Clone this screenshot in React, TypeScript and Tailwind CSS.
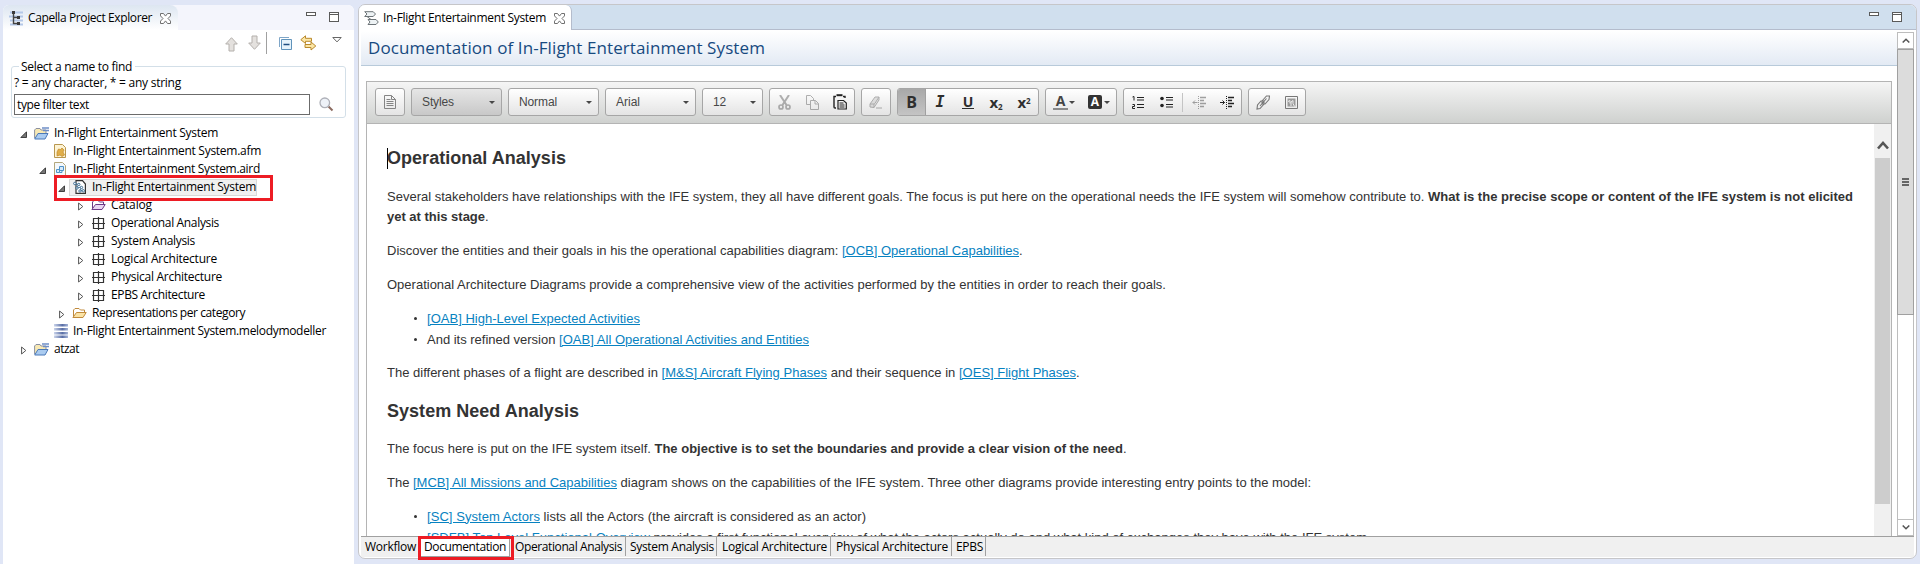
import { useLayoutEffect, useRef, useState, type ReactNode } from "react";

type FitProps = { w: number; children: string; className?: string };

/** Text whose letter spacing is computed so that it spans `w` pixels. */
function Fit({ w, children, className = "" }: FitProps) {
  const ref = useRef<HTMLSpanElement>(null);
  const [spacing, setSpacing] = useState(0);
  useLayoutEffect(() => {
    const el = ref.current;
    if (!el) return;
    el.style.letterSpacing = "0px";
    const natural = el.getBoundingClientRect().width;
    const next = (w - natural) / children.length;
    el.style.letterSpacing = `${next}px`;
    setSpacing(next);
  }, [w, children]);
  return (
    <span ref={ref} className={`inline-block whitespace-pre ${className}`} style={{ letterSpacing: `${spacing}px` }}>
      {children}
    </span>
  );
}

/* ---------- small window icons ---------- */

function CloseIcon() {
  return (
    <svg width="11" height="11" viewBox="0 0 11 11" fill="#fff" stroke="#6f6f6f">
      <path d="M.5.5h3l2 2.6 2-2.6h3v2.4L8 5.5l2.5 2.6v2.4h-3l-2-2.6-2 2.6h-3V8.100L3 5.500.5 2.900z" />
    </svg>
  );
}

function WindowButtons() {
  return (
    <div className="flex items-start gap-[13px]">
      <svg width="10" height="4" viewBox="0 0 10 4">
        <rect x=".5" y=".5" width="9" height="3" fill="#fff" stroke="#5a5a5a" />
      </svg>
      <svg width="10" height="10" viewBox="0 0 10 10">
        <rect x=".5" y=".5" width="9" height="9" fill="#fff" stroke="#5a5a5a" />
        <path d="M0 2.500h10" stroke="#5a5a5a" />
      </svg>
    </div>
  );
}

function ExplorerIcon() {
  return (
    <svg width="15" height="15" viewBox="0 0 15 15">
      <path d="M1 1.500h13M0 5.500h14M1 9.500h13M1 13.500h13" stroke="#b4c8e8" strokeWidth="2" />
      <path d="M4.500 1v11.500H9M4.500 6.500H9" fill="none" stroke="#444" strokeWidth="1.400" />
      <path d="M3 0h3v3H3zM8 5h3v3H8zM8 11h3v3H8z" fill="#3a3a3a" />
    </svg>
  );
}

function ArrowIcon({ down = false }: { down?: boolean }) {
  return (
    <svg width="13" height="15" viewBox="0 0 13 15" className={down ? "rotate-180" : ""}>
      <path d="M6.500.7 12.300 7H9v7H4V7H.7z" fill="#e4e1de" stroke="#b4b0ac" />
    </svg>
  );
}

/* ---------- tree ---------- */

function Folder({ stroke, fill }: { stroke: string; fill: string }) {
  return (
    <svg width="15" height="12" viewBox="0 0 15 12" className="-ml-px">
      <path d="M1.500 9.500V3L3 1.500h4L8.500 3h4v2" fill="#fff" stroke={stroke} />
      <path d="M.9 10.500 4.500 5.500h9.700L11 10.500z" fill={fill} stroke={stroke} />
    </svg>
  );
}

function ProjectIcon() {
  return (
    <svg width="15" height="13" viewBox="0 0 15 13" className="-ml-px">
      <path d="M.6 11V3L2 1.500h4L7 3h5v3" fill="#f8e9b4" stroke="#8b90a0" />
      <path d="M.7 12 4 6.500h10L11 12z" fill="#aacbf0" stroke="#4a78b8" />
      <path d="M8 1h7M9 3.500h6" stroke="#6f8fc8" strokeWidth="1.300" />
    </svg>
  );
}

function FileIcon({ kind }: { kind: "afm" | "aird" | "model" }) {
  if (kind === "model")
    return (
      <svg width="13" height="14" viewBox="0 0 13 14">
        <path d="M3 .6h6.500L12.400 4v9.400H3z" fill="#fff" stroke="#333" strokeWidth="1.200" />
        <path d="M2 4.500 6 4 3.500 8l5-1-1.500 4 3.500-1" fill="none" stroke="#31648c" strokeWidth=".8" />
        <g fill="#fff" stroke="#31648c" strokeWidth=".9">
          <circle cx="1.800" cy="3.500" r="1.200" /><circle cx="5.800" cy="4.500" r="1.200" /><circle cx="4" cy="8" r="1.200" />
          <circle cx="8.500" cy="7.500" r="1.200" /><circle cx="7" cy="11" r="1.200" /><circle cx="10.300" cy="10.800" r="1.200" />
        </g>
      </svg>
    );
  return (
    <svg width="12" height="14" viewBox="0 0 12 14">
      <path d="M.5.5h8l3 3v10H.5z" fill={kind === "afm" ? "#fdf3d4" : "#f4f8fc"} stroke={kind === "afm" ? "#b8974f" : "#b3a77c"} />
      {kind === "afm" ? (
        <path d="M3 8 4.500 5l2 .5L8 4l2 2-1 2 1.500 3-2.500 1.500L6 11l-3 1z" fill="#e0ae4a" stroke="#c08a2c" strokeWidth=".7" />
      ) : (
        <path d="M5.500 4.500h4v4h-4zM2.500 7.500h3v3h-3zM5.500 10.500h2.500v-2" fill="#d7e9f8" stroke="#4e93c8" />
      )}
    </svg>
  );
}

function PackageIcon() {
  return (
    <svg width="13" height="13" viewBox="0 0 13 13" fill="none" stroke="#333">
      <path d="M1.500 1.500h10v10h-10zM6.500 0v13M0 6.500h13" strokeWidth="1.200" />
    </svg>
  );
}

function StackIcon() {
  return (
    <svg width="14" height="14" viewBox="0 0 14 14">
      <defs>
        <linearGradient id="stack">
          <stop offset="0" stopColor="#c9d3ea" />
          <stop offset=".6" stopColor="#5a6fa6" />
          <stop offset="1" stopColor="#a4b3d6" />
        </linearGradient>
      </defs>
      <path d="M0 0h14v2.500H0zM0 4h14v2.500H0zM0 8h14v2.500H0zM0 11.500h14V14H0z" fill="url(#stack)" />
    </svg>
  );
}

type Row = { pad: string; open?: boolean; closed?: boolean; icon: ReactNode; text: string; w: number; selected?: boolean };

const rows: Row[] = [
  { pad: "pl-[15px]", open: true, icon: <ProjectIcon />, text: "In-Flight Entertainment System", w: 164 },
  { pad: "pl-[34px]", icon: <FileIcon kind="afm" />, text: "In-Flight Entertainment System.afm", w: 188 },
  { pad: "pl-[34px]", open: true, icon: <FileIcon kind="aird" />, text: "In-Flight Entertainment System.aird", w: 187 },
  { pad: "pl-[53px]", open: true, icon: <FileIcon kind="model" />, text: "In-Flight Entertainment System", w: 164, selected: true },
  { pad: "pl-[72px]", closed: true, icon: <Folder stroke="#6c3a86" fill="#e8d6f2" />, text: "Catalog", w: 41 },
  { pad: "pl-[72px]", closed: true, icon: <PackageIcon />, text: "Operational Analysis", w: 108 },
  { pad: "pl-[72px]", closed: true, icon: <PackageIcon />, text: "System Analysis", w: 84 },
  { pad: "pl-[72px]", closed: true, icon: <PackageIcon />, text: "Logical Architecture", w: 106 },
  { pad: "pl-[72px]", closed: true, icon: <PackageIcon />, text: "Physical Architecture", w: 111 },
  { pad: "pl-[72px]", closed: true, icon: <PackageIcon />, text: "EPBS Architecture", w: 94 },
  { pad: "pl-[53px]", closed: true, icon: <Folder stroke="#c08a3c" fill="#fbe3a4" />, text: "Representations per category", w: 153 },
  { pad: "pl-[34px]", icon: <StackIcon />, text: "In-Flight Entertainment System.melodymodeller", w: 253 },
  { pad: "pl-[15px]", closed: true, icon: <ProjectIcon />, text: "atzat", w: 25 },
];

function Tree() {
  return (
    <div className="mt-[6px] w-[325px] overflow-hidden">
      {rows.map((r, i) => (
        <div key={i} className={`flex h-[18px] items-center ${r.pad}`}>
          <span className="flex w-[13px] shrink-0 justify-start pt-[3px]">
            {r.open && (
              <svg width="7" height="7" viewBox="0 0 7 7" className="ml-[2px]">
                <path d="M6.500.8v5.700H.8z" fill="#777" stroke="#222" strokeWidth=".8" />
              </svg>
            )}
            {r.closed && (
              <svg width="6" height="9" viewBox="0 0 6 9" className="ml-[3px]">
                <path d="M.6 1v7L4.800 4.500z" fill="#fff" stroke="#555" />
              </svg>
            )}
          </span>
          <span className={`flex h-[17px] items-center ${r.selected ? "border border-[#d8d8d8] bg-[#f0f0f0]" : "border border-transparent"}`}>
            <span className="ml-[3px] flex w-[19px] shrink-0 items-center">{r.icon}</span>
            <Fit w={r.w}>{r.text}</Fit>
          </span>
        </div>
      ))}
    </div>
  );
}

function Explorer() {
  return (
    <aside className="relative flex w-[351px] shrink-0 flex-col overflow-hidden rounded-t-[6px] bg-white">
      <div className="flex h-[25px] justify-between bg-[#f4f5fc]">
        <div className="flex w-[175px] items-center rounded-tr-[8px] bg-gradient-to-b from-[#dde6f1] to-white pl-[6px] pt-[1px]">
          <ExplorerIcon />
          <Fit w={124} className="ml-[4px]">Capella Project Explorer</Fit>
          <span className="ml-[8px]"><CloseIcon /></span>
        </div>
        <div className="mr-[15px] mt-[7px]"><WindowButtons /></div>
      </div>
      <div className="flex h-[26px] items-start pl-[222px] pt-[2px]">
        <span className="mt-[5px]"><ArrowIcon /></span>
        <span className="ml-[10px] mt-[3px]"><ArrowIcon down /></span>
        <span className="ml-[5px] h-[22px] w-px bg-[#a0a0a0]" />
        <svg width="13" height="13" viewBox="0 0 13 13" className="ml-[12px] mt-[5px]">
          <path d="M.5 10V.5H10" fill="none" stroke="#7fa6c8" />
          <path d="M2.500 2.500h10v10h-10z" fill="#e6f3fb" stroke="#5f93bb" />
          <path d="M4.500 7.500h6" stroke="#1f4e80" strokeWidth="1.500" />
        </svg>
        <svg width="17" height="16" viewBox="0 0 17 16" className="ml-[8px] mt-[3px]" fill="#fbe6a6" stroke="#b9892c">
          <path d="M5.500.8v2.500h6v3h-6V8.500L.8 4.700zM11 7v2.500H5v3h6V15l4.800-4z" />
        </svg>
        <svg width="10" height="6" viewBox="0 0 10 6" className="ml-[15px] mt-[5px]">
          <path d="M.8.5h8.400L5 4.900z" fill="#fff" stroke="#666" />
        </svg>
      </div>
      <div className="ml-[8px] mt-[10px] h-[52px] w-[335px] rounded-[3px] border border-[#d3dfe8] pl-[2px]">
        <div className="-mt-[9px] ml-[5px] h-[18px] w-[116px] bg-white pl-[2px] leading-[18px]">
          <Fit w={111}>Select a name to find</Fit>
        </div>
        <div className="-mt-[2px] h-[17px] leading-[17px]"><Fit w={167}>? = any character, * = any string</Fit></div>
        <div className="mt-[3px] flex items-center">
          <div className="flex h-[21px] w-[296px] items-center border border-[#6b6b6b] pl-[2px]">
            <Fit w={72}>type filter text</Fit>
          </div>
          <svg width="15" height="15" viewBox="0 0 15 15" className="ml-[9px]">
            <path d="m9.500 9.500 4 4" stroke="#8b6a5f" strokeWidth="2" />
            <circle cx="5.800" cy="5.800" r="4.800" fill="#eef2f8" stroke="#aeb0b8" strokeWidth="1.300" />
          </svg>
        </div>
      </div>
      <Tree />
      <div className="absolute left-[51px] top-[170px] h-[26px] w-[219px] border-[3px] border-[#ed1c24]" />
    </aside>
  );
}

/* ---------- editor toolbar ---------- */

const box = "flex h-[28px] items-center rounded-[3px] border border-[#a6a6a6] bg-gradient-to-b from-white to-[#e4e4e4]";

function Caret() {
  return (
    <svg width="6" height="3" viewBox="0 0 6 3"><path d="M0 0h6L3 3z" fill="#474747" /></svg>
  );
}

function Combo({ label, w, width, dark = false }: { label: string; w: number; width: string; dark?: boolean }) {
  return (
    <div className={`flex h-[28px] items-center justify-between rounded-[3px] border border-[#a6a6a6] bg-gradient-to-b pl-[10px] pr-[6px] text-[12px] text-[#474747] ${width} ${dark ? "from-[#e6e6e6] to-[#c8c8c8]" : "from-white to-[#e4e4e4]"}`}>
      <Fit w={w}>{label}</Fit>
      <Caret />
    </div>
  );
}

function Cell({ children, faded = false }: { children: ReactNode; faded?: boolean }) {
  return <span className={`flex w-[28px] shrink-0 items-center justify-center ${faded ? "opacity-40" : ""}`}>{children}</span>;
}

function IndentIcon({ out = false }: { out?: boolean }) {
  return (
    <svg width="14" height="13" viewBox="0 0 14 13" fill="none" stroke="#222">
      <path d="M8 1.500h6M8 4.500h4M8 7.500h6M8 10.500h4" strokeWidth="1.300" />
      <path d="M6.500 0v13" strokeDasharray="1 1" />
      <path d={out ? "M5.500 6.500H.8M3 4.500l-2 2 2 2" : "M0 6.500h4.500M2.500 4.500l2 2-2 2"} />
    </svg>
  );
}

function Toolbar() {
  return (
    <div className="flex h-[41px] shrink-0 gap-[6px] bg-gradient-to-b from-[#f5f5f5] to-[#cfd1cf] pl-[8px] pt-[6px] font-['Liberation_Sans',sans-serif]">
      <div className={`${box} w-[30px] justify-center`}>
        <svg width="12" height="14" viewBox="0 0 12 14" fill="none" stroke="#858585">
          <path d="M.5.5h7l4 4v9H.5zM7.500.5v4h4M2.500 4.500h4M2.500 6.500h7M2.500 8.500h7M2.500 10.500h7" />
        </svg>
      </div>
      <Combo label="Styles" w={32} width="w-[91px]" dark />
      <Combo label="Normal" w={38} width="w-[91px]" />
      <Combo label="Arial" w={24} width="w-[91px]" />
      <Combo label="12" w={13} width="w-[61px]" />
      <div className={`${box} w-[86px]`}>
        <Cell faded>
          <svg width="13" height="15" viewBox="0 0 13 15" fill="none" stroke="#444" strokeWidth="1.700">
            <path d="M2 0l6.500 10M11 0 4.500 10" strokeWidth="2" /><circle cx="3" cy="12" r="2" /><circle cx="10" cy="12" r="2" />
          </svg>
        </Cell>
        <Cell faded>
          <svg width="13" height="15" viewBox="0 0 13 15" fill="none" stroke="#444">
            <path d="M4 9.500H.5v-9h4l3 3V5M4.500 5.500h5l3 3v6h-8zM9 5.500v3.500h3.500" />
          </svg>
        </Cell>
        <Cell>
          <svg width="14" height="16" viewBox="0 0 14 16" fill="none" stroke="#222">
            <path d="M3 2.500H1v10.500q0 1 1 1h1M10 2.500h2V4" strokeWidth="1.400" />
            <path d="M3.500 1.200h6" strokeWidth="2" />
            <path d="M5 6.500h5.500L13.300 9v6H5z" strokeWidth="1.200" />
            <path d="M6.500 9h4M6.500 11h5M6.500 13h5" />
          </svg>
        </Cell>
      </div>
      <div className={`${box} w-[30px]`}>
        <Cell faded>
          <svg width="14" height="13" viewBox="0 0 14 13" fill="#bbb" stroke="#444">
            <path d="m1 8 5-7h4L5.500 8zM1 8v3l4 .5V8M5 11.500 10 4V1M7 12h6" />
          </svg>
        </Cell>
      </div>
      <div className={`${box} w-[142px] overflow-hidden text-[#2e2e2e]`}>
        <span className="flex h-full w-[28px] shrink-0 items-center justify-center border-r border-[#a0a0a0] bg-gradient-to-b from-[#a8a8a8] to-[#c4c4c4] font-['Open_Sans',sans-serif] text-[16px] font-bold">B</span>
        <Cell><span className="font-['DejaVu_Sans_Mono',monospace] text-[15px] font-bold italic">I</span></Cell>
        <Cell><span className="border-b border-[#2e2e2e] px-px font-['Open_Sans',sans-serif] text-[14px] font-bold leading-[13px]">U</span></Cell>
        <Cell><span className="font-['Open_Sans',sans-serif] text-[15px] font-bold leading-none">x<sub className="text-[8px]">2</sub></span></Cell>
        <Cell><span className="font-['Open_Sans',sans-serif] text-[15px] font-bold leading-none">x<sup className="text-[8px]">2</sup></span></Cell>
      </div>
      <div className={`${box} w-[72px] pl-[7px]`}>
        <span className="flex h-[15px] w-[15px] items-center justify-center border-b-2 border-[#8a8a8a] font-['Open_Sans',sans-serif] text-[14px] font-bold text-[#444]">A</span>
        <span className="ml-px"><Caret /></span>
        <span className="ml-[13px] flex size-[14px] items-center justify-center rounded-[2px] bg-[#333] font-['Open_Sans',sans-serif] text-[12px] font-bold text-white">A</span>
        <span className="ml-[2px]"><Caret /></span>
      </div>
      <div className={`${box} w-[119px]`}>
        <Cell>
          <svg width="12" height="13" viewBox="0 0 12 13" fill="none" stroke="#222">
            <path d="M.5 1 2 .5v4M.5 8.500h2v2h-2v2h2.500" />
            <path d="M5 1.500h7M5 4h7M5 8.500h7M5 11.500h7" strokeWidth="1.200" />
          </svg>
        </Cell>
        <Cell>
          <svg width="13" height="12" viewBox="0 0 13 12" stroke="#222">
            <circle cx="2" cy="2.500" r="1.800" fill="#222" stroke="none" /><circle cx="2" cy="9.500" r="1.800" fill="#222" stroke="none" />
            <path d="M6 1.500h7M6 4h7M6 8.500h7M6 11h7" strokeWidth="1.200" />
          </svg>
        </Cell>
        <span className="mx-[2px] h-[19px] w-px bg-[#c4c4c4]" />
        <Cell faded><IndentIcon out /></Cell>
        <Cell><IndentIcon /></Cell>
      </div>
      <div className={`${box} w-[58px]`}>
        <Cell>
          <svg width="14" height="15" viewBox="0 0 14 15" fill="none" stroke="#777" strokeWidth="1.100">
            <path d="M6 6 10.500 1h3l-.5 3.500-4 4.500H6zM1 14l.5-4L5 6h3v3l-4 4.500zM4 11l6.500-7.500" />
          </svg>
        </Cell>
        <Cell>
          <svg width="13" height="13" viewBox="0 0 13 13" fill="none" stroke="#777">
            <path d="M.5.5h12v12H.5z" /><path d="M2.500 2.500h8v8h-8z" fill="#999" stroke="none" />
            <path d="M3 5.500l2-1v3M6 10V6l2-1.500v3l1.500 3" stroke="#eee" />
          </svg>
        </Cell>
      </div>
    </div>
  );
}

/* ---------- document ---------- */

function A({ w, children }: { w: number; children: string }) {
  return <Fit w={w} className="text-[#0782c1] underline">{children}</Fit>;
}

function Bullet({ children }: { children: ReactNode }) {
  return (
    <div className="flex h-[21px] items-center pl-[27px]">
      <span className="mr-[10px] size-[3px] rounded-full bg-[#333]" />
      {children}
    </div>
  );
}

const line = "flex h-[21px] items-center";

function Doc() {
  return (
    <div className="min-w-0 grow overflow-hidden whitespace-nowrap pl-[20px] pt-[20px] font-['Liberation_Sans',sans-serif] text-[13px] text-[#333]">
      <div className="flex h-[28px] items-center text-[18px] font-bold">
        <span className="h-[21px] w-px bg-black" />
        <Fit w={179} className="-ml-px">Operational Analysis</Fit>
      </div>
      <div className="mt-[15px] flex h-[20px] items-center">
        <Fit w={1041}>Several stakeholders have relationships with the IFE system, they all have different goals. The focus is put here on the operational needs the IFE system will somehow contribute to. </Fit>
        <Fit w={425} className="font-bold">What is the precise scope or content of the IFE system is not elicited</Fit>
      </div>
      <div className="flex h-[20px] items-center"><Fit w={98} className="font-bold">yet at this stage</Fit>.</div>
      <div className={`${line} mt-[13px]`}>
        <Fit w={455}>{"Discover the entities and their goals in his the operational capabilities diagram: "}</Fit>
        <A w={177}>[OCB] Operational Capabilities</A>.
      </div>
      <div className={`${line} mt-[13px]`}>
        <Fit w={779}>Operational Architecture Diagrams provide a comprehensive view of the activities performed by the entities in order to reach their goals.</Fit>
      </div>
      <div className="mt-[13px]">
        <Bullet><A w={213}>[OAB] High-Level Expected Activities</A></Bullet>
        <Bullet><Fit w={132}>{"And its refined version "}</Fit><A w={250}>[OAB] All Operational Activities and Entities</A></Bullet>
      </div>
      <div className={`${line} mt-[12px]`}>
        <Fit w={274.5}>{"The different phases of a flight are described in "}</Fit>
        <A w={165.5}>[M&S] Aircraft Flying Phases</A>
        <Fit w={132}>{" and their sequence in "}</Fit>
        <A w={117}>[OES] Flight Phases</A>.
      </div>
      <div className="mt-[14px] flex h-[28px] items-center text-[18px] font-bold">
        <Fit w={192}>System Need Analysis</Fit>
      </div>
      <div className={`${line} mt-[13px]`}>
        <Fit w={267.5}>{"The focus here is put on the IFE system itself. "}</Fit>
        <Fit w={468.5} className="font-bold">The objective is to set the boundaries and provide a clear vision of the need</Fit>.
      </div>
      <div className={`${line} mt-[13px]`}>
        <Fit w={26}>{"The "}</Fit>
        <A w={204}>[MCB] All Missions and Capabilities</A>
        <Fit w={694}>{" diagram shows on the capabilities of the IFE system. Three other diagrams provide interesting entry points to the model:"}</Fit>
      </div>
      <div className="mt-[13px]">
        <Bullet><A w={113}>[SC] System Actors</A><Fit w={326}>{" lists all the Actors (the aircraft is considered as an actor)"}</Fit></Bullet>
        <Bullet><A w={223}>[SDFB] Top Level Functional Overview</A><Fit w={717}>{" provides a first functional overview of what the actors actually do and what kind of exchanges they have with the IFE system"}</Fit></Bullet>
      </div>
    </div>
  );
}

function PageTabs() {
  return (
    <div className="flex h-[21px] shrink-0 border-t border-[#a0a0a0] bg-[#f0f0f0] leading-[19px]">
      <span className="w-[59px] pl-[4px]"><Fit w={51}>Workflow</Fit></span>
      <span className="relative flex w-[90px] border-r border-b border-[#a0a0a0] bg-white pl-[4px]">
        <Fit w={82}>Documentation</Fit>
        <span className="absolute -left-[2px] -top-px h-[24px] w-[96px] border-[3px] border-[#ed1c24]" />
      </span>
      <span className="h-[19px] w-[116px] border-r border-[#a0a0a0] pl-[5px]"><Fit w={107}>Operational Analysis</Fit></span>
      <span className="h-[19px] w-[91px] border-r border-[#a0a0a0] pl-[4px]"><Fit w={84}>System Analysis</Fit></span>
      <span className="h-[19px] w-[114px] border-r border-[#a0a0a0] pl-[5px]"><Fit w={105}>Logical Architecture</Fit></span>
      <span className="h-[19px] w-[121px] border-r border-[#a0a0a0] pl-[5px]"><Fit w={112}>Physical Architecture</Fit></span>
      <span className="h-[19px] w-[34px] border-r border-[#a0a0a0] pl-[4px]"><Fit w={27}>EPBS</Fit></span>
    </div>
  );
}

function OuterScrollbar() {
  return (
    <div className="mt-[2px] flex w-[17px] shrink-0 flex-col">
      <div className="flex h-[17px] items-center justify-center border border-[#bdbdbd] bg-white">
        <svg width="8" height="5" viewBox="0 0 8 5"><path d="M.7 4.500 4 1.200l3.300 3.300" fill="none" stroke="#555" strokeWidth="1.500" /></svg>
      </div>
      <div className="flex h-[266px] flex-col items-center justify-center gap-px border border-[#a0a0a0] bg-[#dcdcdc]">
        <span className="h-[2px] w-[7px] bg-[#666]" />
        <span className="h-[2px] w-[7px] bg-[#666]" />
        <span className="h-[2px] w-[7px] bg-[#666]" />
      </div>
      <div className="grow border-x border-[#bdbdbd] bg-white" />
      <div className="flex h-[17px] items-center justify-center border border-[#bdbdbd] bg-white">
        <svg width="8" height="5" viewBox="0 0 8 5"><path d="M.7.500 4 3.800 7.300.500" fill="none" stroke="#555" strokeWidth="1.500" /></svg>
      </div>
    </div>
  );
}

function Editor() {
  return (
    <main className="-mt-px mb-[5px] ml-[4px] mr-[3px] flex min-w-0 grow flex-col rounded-[7px] border border-[#c6c6c9] bg-white">
      <div className="flex h-[25px] shrink-0 justify-between rounded-t-[6px] border-b border-[#b4bccc] bg-[#d0dfee]">
        <div className="-mb-px flex w-[213px] items-center rounded-t-[6px] border-r border-[#b4bccc] bg-white pl-[5px] pt-[1px]">
          <svg width="15" height="15" viewBox="0 0 15 15" fill="#eef3f5" stroke="#6d7478">
            <path d="M.7.7h8.500L11.500 3 9.200 5.500H.7L3 3zM4 8.500h8L14.300 11 12 13.500H4L6 11zM3 5.500l4 3" />
          </svg>
          <Fit w={163} className="ml-[4px]">In-Flight Entertainment System</Fit>
          <span className="ml-[8px]"><CloseIcon /></span>
        </div>
        <div className="mr-[14px] mt-[7px]"><WindowButtons /></div>
      </div>
      <div className="flex min-h-0 grow pl-[2px] pr-[2px]">
        <div className="flex min-w-0 grow flex-col">
          <div className="mt-[1px] flex h-[35px] shrink-0 items-center border-b border-[#b8cada] bg-gradient-to-b from-white to-[#e3eaf4] pl-[7px] text-[17px] text-[#174a80]">
            <Fit w={397}>Documentation of In-Flight Entertainment System</Fit>
          </div>
          <div className="ml-[5px] mr-[5px] mt-[15px] flex min-h-0 grow flex-col border-x border-t border-[#b4b4b4]">
            <Toolbar />
            <div className="flex min-h-0 grow border-t border-[#b4b4b4]">
              <Doc />
              <div className="flex w-[17px] shrink-0 flex-col items-center bg-[#f0f0f0] pt-[17px]">
                <svg width="12" height="9" viewBox="0 0 12 9"><path d="M1 7.500 6 2l5 5.500" fill="none" stroke="#555" strokeWidth="2.600" /></svg>
                <span className="mt-[8px] h-[346px] w-[15px] bg-[#cdcdcd]" />
              </div>
            </div>
          </div>
        </div>
        <OuterScrollbar />
      </div>
      <div className="pb-px pl-[2px] pr-[2px]"><PageTabs /></div>
    </main>
  );
}

export default function App() {
  return (
    <div className="flex h-[564px] w-[1920px] overflow-hidden bg-[#e0e6f6] pl-[3px] pt-[5px] font-['Open_Sans','Noto_Sans',sans-serif] text-[12px] leading-[18px] text-black">
      <Explorer />
      <Editor />
    </div>
  );
}
